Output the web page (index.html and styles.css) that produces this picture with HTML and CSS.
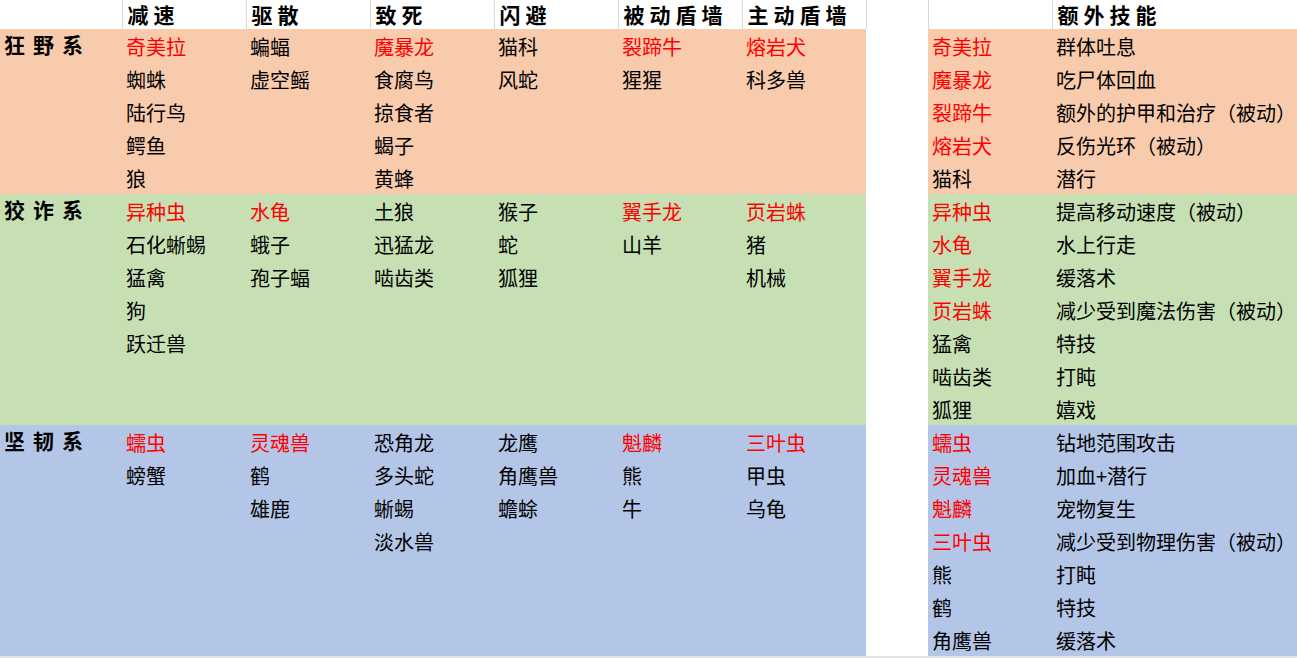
FILE: index.html
```html
<!DOCTYPE html>
<html lang="zh">
<head>
<meta charset="utf-8">
<title>宠物技能表</title>
<link rel="stylesheet" href="styles.css">
</head>
<body>
<table class="sheet">
  <colgroup>
    <col class="c-label"><col class="c-std"><col class="c-std"><col class="c-std"><col class="c-std"><col class="c-std"><col class="c-std"><col class="c-gap"><col class="c-std"><col class="c-wide">
  </colgroup>
  <thead>
    <tr class="head">
      <th></th><th>减速</th><th>驱散</th><th>致死</th><th>闪避</th><th>被动盾墙</th><th>主动盾墙</th><th class="gap"></th><th></th><th>额外技能</th>
    </tr>
  </thead>
  <tbody class="wild">
    <tr><th class="label">狂野系</th><td class="r">奇美拉</td><td>蝙蝠</td><td class="r">魔暴龙</td><td>猫科</td><td class="r">裂蹄牛</td><td class="r">熔岩犬</td><td class="gap"></td><td class="r">奇美拉</td><td>群体吐息</td></tr>
    <tr><th></th><td>蜘蛛</td><td>虚空鳐</td><td>食腐鸟</td><td>风蛇</td><td>猩猩</td><td>科多兽</td><td class="gap"></td><td class="r">魔暴龙</td><td>吃尸体回血</td></tr>
    <tr><th></th><td>陆行鸟</td><td></td><td>掠食者</td><td></td><td></td><td></td><td class="gap"></td><td class="r">裂蹄牛</td><td>额外的护甲和治疗（被动）</td></tr>
    <tr><th></th><td>鳄鱼</td><td></td><td>蝎子</td><td></td><td></td><td></td><td class="gap"></td><td class="r">熔岩犬</td><td>反伤光环（被动）</td></tr>
    <tr><th></th><td>狼</td><td></td><td>黄蜂</td><td></td><td></td><td></td><td class="gap"></td><td>猫科</td><td>潜行</td></tr>
  </tbody>
  <tbody class="cunning">
    <tr><th class="label">狡诈系</th><td class="r">异种虫</td><td class="r">水龟</td><td>土狼</td><td>猴子</td><td class="r">翼手龙</td><td class="r">页岩蛛</td><td class="gap"></td><td class="r">异种虫</td><td>提高移动速度（被动）</td></tr>
    <tr><th></th><td>石化蜥蜴</td><td>蛾子</td><td>迅猛龙</td><td>蛇</td><td>山羊</td><td>猪</td><td class="gap"></td><td class="r">水龟</td><td>水上行走</td></tr>
    <tr><th></th><td>猛禽</td><td>孢子蝠</td><td>啮齿类</td><td>狐狸</td><td></td><td>机械</td><td class="gap"></td><td class="r">翼手龙</td><td>缓落术</td></tr>
    <tr><th></th><td>狗</td><td></td><td></td><td></td><td></td><td></td><td class="gap"></td><td class="r">页岩蛛</td><td>减少受到魔法伤害（被动）</td></tr>
    <tr><th></th><td>跃迁兽</td><td></td><td></td><td></td><td></td><td></td><td class="gap"></td><td>猛禽</td><td>特技</td></tr>
    <tr><th></th><td></td><td></td><td></td><td></td><td></td><td></td><td class="gap"></td><td>啮齿类</td><td>打盹</td></tr>
    <tr><th></th><td></td><td></td><td></td><td></td><td></td><td></td><td class="gap"></td><td>狐狸</td><td>嬉戏</td></tr>
  </tbody>
  <tbody class="tenacity">
    <tr><th class="label">坚韧系</th><td class="r">蠕虫</td><td class="r">灵魂兽</td><td>恐角龙</td><td>龙鹰</td><td class="r">魁麟</td><td class="r">三叶虫</td><td class="gap"></td><td class="r">蠕虫</td><td>钻地范围攻击</td></tr>
    <tr><th></th><td>螃蟹</td><td>鹤</td><td>多头蛇</td><td>角鹰兽</td><td>熊</td><td>甲虫</td><td class="gap"></td><td class="r">灵魂兽</td><td>加血+潜行</td></tr>
    <tr><th></th><td></td><td>雄鹿</td><td>蜥蜴</td><td>蟾蜍</td><td>牛</td><td>乌龟</td><td class="gap"></td><td class="r">魁麟</td><td>宠物复生</td></tr>
    <tr><th></th><td></td><td></td><td>淡水兽</td><td></td><td></td><td></td><td class="gap"></td><td class="r">三叶虫</td><td>减少受到物理伤害（被动）</td></tr>
    <tr><th></th><td></td><td></td><td></td><td></td><td></td><td></td><td class="gap"></td><td>熊</td><td>打盹</td></tr>
    <tr><th></th><td></td><td></td><td></td><td></td><td></td><td></td><td class="gap"></td><td>鹤</td><td>特技</td></tr>
    <tr><th></th><td></td><td></td><td></td><td></td><td></td><td></td><td class="gap"></td><td>角鹰兽</td><td>缓落术</td></tr>
  </tbody>
</table>
<div class="edge"></div>
</body>
</html>
```
FILE: styles.css
```css
html, body {
  margin: 0;
  padding: 0;
  background: #ffffff;
}
body {
  width: 1297px;
  height: 658px;
  overflow: hidden;
  font-family: "Noto Sans CJK SC", "Noto Sans", sans-serif;
  color: #000;
}
.sheet {
  border-collapse: collapse;
  table-layout: fixed;
  width: 1297px;
}
.c-label { width: 122px; }
.c-std { width: 124px; }
.c-gap { width: 62px; }
.c-wide { width: auto; }

.sheet td, .sheet th {
  padding: 2px 0 0 4px;
  height: 33px;
  font-size: 20px;
  line-height: 31px;
  text-align: left;
  white-space: nowrap;
  font-weight: 400;
  vertical-align: top;
  box-sizing: border-box;
}
.sheet .head th {
  height: 29px;
  padding: 0 0 0 5px;
  line-height: 28px;
  font-size: 21px;
  font-weight: 700;
  letter-spacing: 5px;
  border-left: 1px solid #d9d9d9;
}
.sheet .head th:first-child { border-left: none; }

.sheet th.label {
  font-weight: 700;
  font-size: 21px;
  letter-spacing: 8px;
  padding: 0 0 0 4px;
  line-height: 31px;
}

.wild td, .wild th { background: #f8cbad; }
.cunning td, .cunning th { background: #c6e0b4; }
.tenacity td, .tenacity th { background: #b4c6e7; }
.sheet td.gap, .sheet th.gap { background: #ffffff; }

.r { color: #ff0000; }

.edge {
  height: 2px;
  background: #e3e3e3;
}
```
